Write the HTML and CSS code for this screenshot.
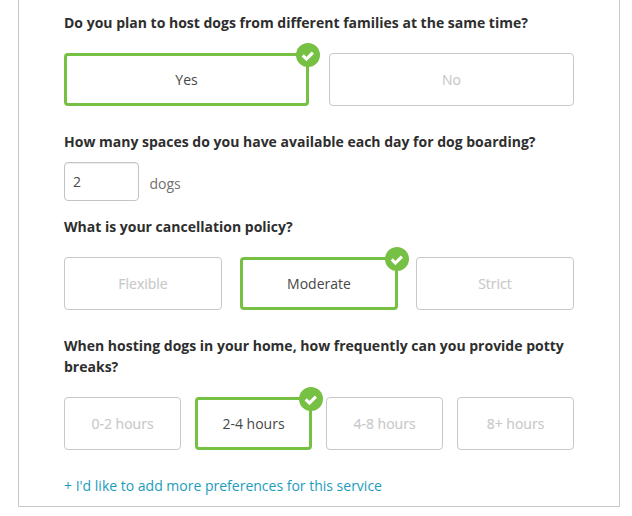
FILE: index.html
```html
<!DOCTYPE html>
<html lang="en">
<head>
<meta charset="utf-8">
<title>Boarding preferences</title>
<link rel="stylesheet" href="styles.css">
</head>
<body>
<main class="panel">
  <section class="question families">
    <h2>Do you plan to host dogs from different families at the same time?</h2>
    <div class="options two">
      <div class="option selected">Yes<svg class="check" viewBox="0 0 24 24"><circle cx="12" cy="12" r="12"/><path d="M6.7 12.4l3.7 3.7 6.5-6.5"/></svg></div>
      <div class="option">No</div>
    </div>
  </section>
  <section class="question spaces">
    <h2>How many spaces do you have available each day for dog boarding?</h2>
    <div class="amount"><input type="text" value="2" aria-label="Spaces"><span>dogs</span></div>
  </section>
  <section class="question policy">
    <h2>What is your cancellation policy?</h2>
    <div class="options three">
      <div class="option">Flexible</div>
      <div class="option selected">Moderate<svg class="check" viewBox="0 0 24 24"><circle cx="12" cy="12" r="12"/><path d="M6.7 12.4l3.7 3.7 6.5-6.5"/></svg></div>
      <div class="option">Strict</div>
    </div>
  </section>
  <section class="question breaks">
    <h2>When hosting dogs in your home, how frequently can you provide potty breaks?</h2>
    <div class="options four">
      <div class="option">0-2 hours</div>
      <div class="option selected">2-4 hours<svg class="check" viewBox="0 0 24 24"><circle cx="12" cy="12" r="12"/><path d="M6.7 12.4l3.7 3.7 6.5-6.5"/></svg></div>
      <div class="option">4-8 hours</div>
      <div class="option">8+ hours</div>
    </div>
  </section>
  <a class="more">+ I'd like to add more preferences for this service</a>
</main>
</body>
</html>
```
FILE: styles.css
```css
* { box-sizing: border-box; }
body {
  margin: 0;
  background: #fff;
  font: 14px/21px "Open Sans", "Noto Sans", sans-serif;
  color: #333;
}
.panel {
  width: 602px;
  height: 507px;
  margin-left: 18px;
  padding: 12px 45px 0;
  border: 1px solid #c8c8c8;
  border-top: 0;
}
h2 { margin: 0; font-size: 14px; line-height: 21px; font-weight: 700; color: #2e2e2e; }
.options { display: grid; margin-top: 20px; }
.two { grid-template-columns: repeat(2, 245px); gap: 20px; }
.three { grid-template-columns: repeat(3, 158px); gap: 18px; }
.four { grid-template-columns: repeat(4, 117px); gap: 14px; }
.option {
  position: relative;
  height: 53px;
  display: flex;
  align-items: center;
  justify-content: center;
  border: 1px solid #c8c8c8;
  border-radius: 4px;
  color: #c8c8c8;
  -webkit-text-stroke: 0.15px #c8c8c8;
}
.selected { border: 3px solid #76c043; color: #474747; -webkit-text-stroke: 0; }
.check { position: absolute; top: -13px; right: -14px; width: 24px; height: 24px; }
.check circle { fill: #76c043; }
.check path { fill: none; stroke: #fff; stroke-width: 3.1; }
.families { height: 119px; }
.spaces { height: 85px; }
.policy { height: 119px; }
.amount { display: flex; margin-top: 10px; }
.amount input {
  width: 75px;
  height: 39px;
  padding: 0 8px;
  border: 1px solid #c4c4c4;
  border-radius: 4px;
  box-shadow: inset 0 1px 1px rgba(0, 0, 0, 0.08);
  font: inherit;
  color: #484848;
}
.amount span { margin: 11px 0 0 10.5px; color: #707070; }
.more { display: block; margin-top: 25px; color: #1c9cbd; }
```
